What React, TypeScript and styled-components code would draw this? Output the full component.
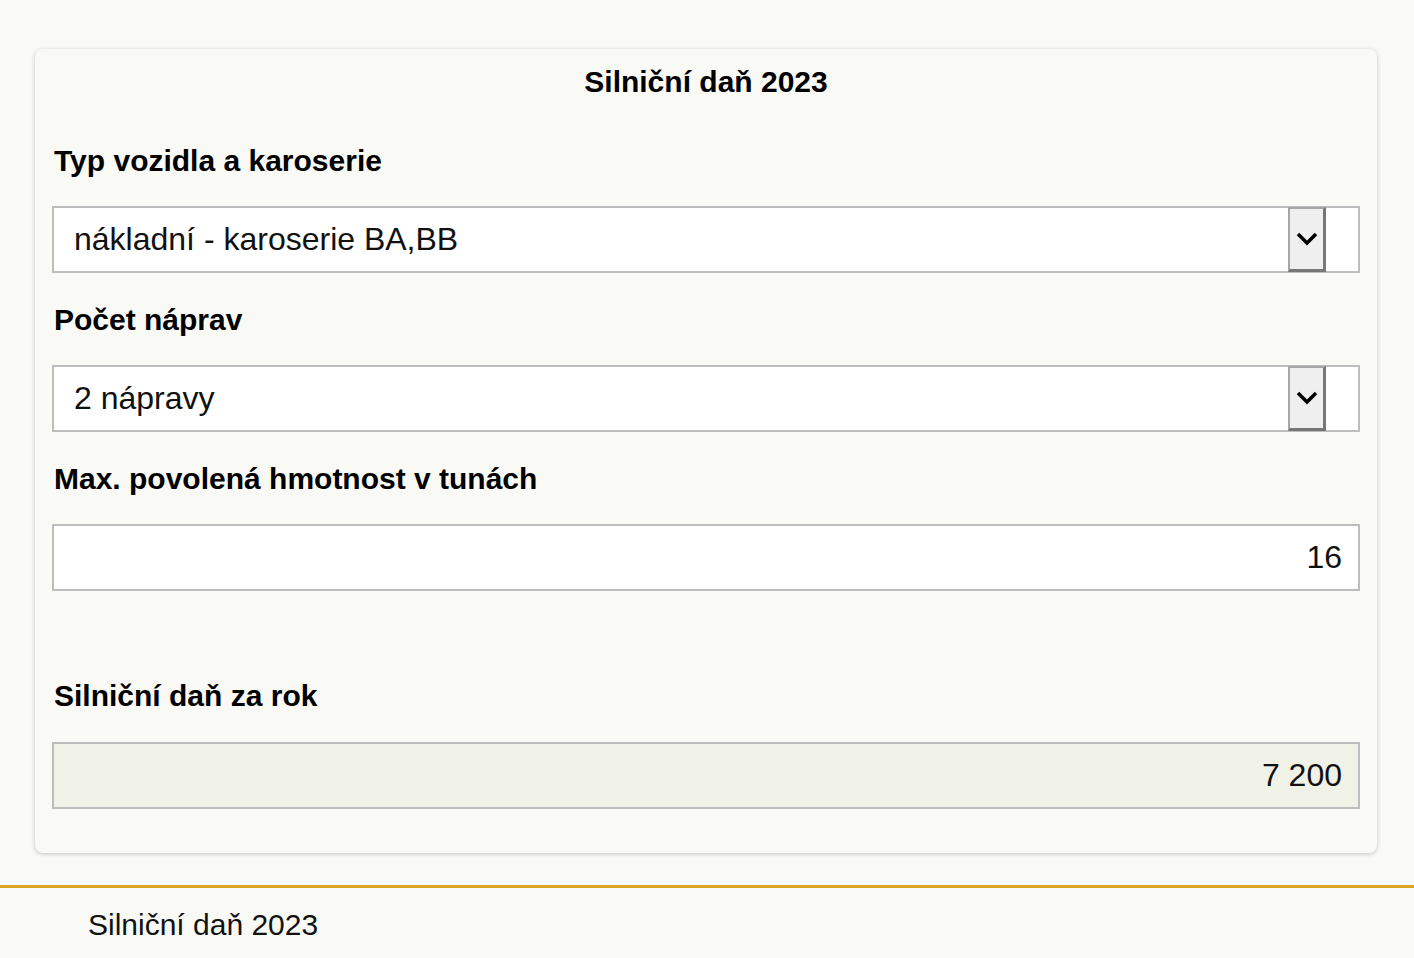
import styled, { createGlobalStyle } from 'styled-components';

const GlobalStyle = createGlobalStyle`
  html, body {
    margin: 0;
    padding: 0;
    background: #f9f9f5;
    font-family: 'Liberation Sans', Arial, sans-serif;
    color: #111;
  }
`;

type fieldType = {
  label: string;
  value: string;
  kind: 'select' | 'input';
};

const fields: fieldType[] = [
  { label: 'Typ vozidla a karoserie', value: 'nákladní - karoserie BA,BB', kind: 'select' },
  { label: 'Počet náprav', value: '2 nápravy', kind: 'select' },
  { label: 'Max. povolená hmotnost v tunách', value: '16', kind: 'input' },
];

function Chevron() {
  return (
    <svg width='22' height='16' viewBox='0 0 22 16'>
      <path d='M2 3 L11 12 L20 3' fill='none' stroke='#000' strokeWidth='3.5' />
    </svg>
  );
}

function App() {
  return (
    <>
      <GlobalStyle />
      <Page>
        <Card>
          <Title>Silniční daň 2023</Title>
          <Fields>
            {fields.map((f) => (
              <Group key={f.label}>
                <Label>{f.label}</Label>
                {f.kind === 'select' ? (
                  <Box>
                    <BoxText>{f.value}</BoxText>
                    <DropButton>
                      <Chevron />
                    </DropButton>
                    <Spacer />
                  </Box>
                ) : (
                  <Box>
                    <BoxText $right>{f.value}</BoxText>
                  </Box>
                )}
              </Group>
            ))}
            <Group $result>
              <Label>Silniční daň za rok</Label>
              <Box $readonly>
                <BoxText $right>7 200</BoxText>
              </Box>
            </Group>
          </Fields>
        </Card>
        <Footer>
          <FooterText>Silniční daň 2023</FooterText>
        </Footer>
      </Page>
    </>
  );
}

const Page = styled.div`
  width: 1414px;
  padding-top: 49px;
  box-sizing: border-box;
`;

const Card = styled.div`
  margin-left: 35px;
  width: 1342px;
  box-sizing: border-box;
  padding: 15px 17px 44px;
  border-radius: 8px;
  background: #f9f9f5;
  box-shadow: 0 1px 4px rgba(0, 0, 0, 0.22);
`;

const Title = styled.h1`
  margin: 0 0 43px;
  font-size: 30px;
  line-height: 36px;
  font-weight: bold;
  text-align: center;
  color: #000;
`;

const Fields = styled.div`
  display: flex;
  flex-direction: column;
  gap: 29px;
`;

const Group = styled.div<{ $result?: boolean }>`
  display: flex;
  flex-direction: column;
  gap: ${({ $result }) => ($result ? '28px' : '27px')};
  margin-top: ${({ $result }) => ($result ? '58px' : '0')};
`;

const Label = styled.label`
  padding-left: 2px;
  font-size: 30px;
  line-height: 36px;
  font-weight: bold;
  color: #000;
`;

const Box = styled.div<{ $readonly?: boolean }>`
  display: flex;
  align-items: center;
  height: 67px;
  box-sizing: border-box;
  border: 2px solid #bdbdbd;
  background: ${({ $readonly }) => ($readonly ? '#f1f2e7' : '#fff')};
`;

const BoxText = styled.span<{ $right?: boolean }>`
  flex: 1;
  padding: ${({ $right }) => ($right ? '0 16px 0 0' : '0 0 0 20px')};
  font-size: 32px;
  text-align: ${({ $right }) => ($right ? 'right' : 'left')};
  color: #111;
`;

const DropButton = styled.span`
  display: flex;
  align-items: center;
  justify-content: center;
  width: 38px;
  height: 65px;
  box-sizing: border-box;
  background: #efefef;
  border-style: solid;
  border-width: 2px 3px 3px 2px;
  border-color: #a6a6a6 #767676 #767676 #a6a6a6;
`;

const Spacer = styled.span`
  width: 32px;
`;

const Footer = styled.footer`
  margin-top: 32px;
  border-top: 3px solid #d8a422;
  padding: 19px 0 0 88px;
`;

const FooterText = styled.div`
  font-size: 30px;
  line-height: 36px;
  color: #111;
`;

export default App;
